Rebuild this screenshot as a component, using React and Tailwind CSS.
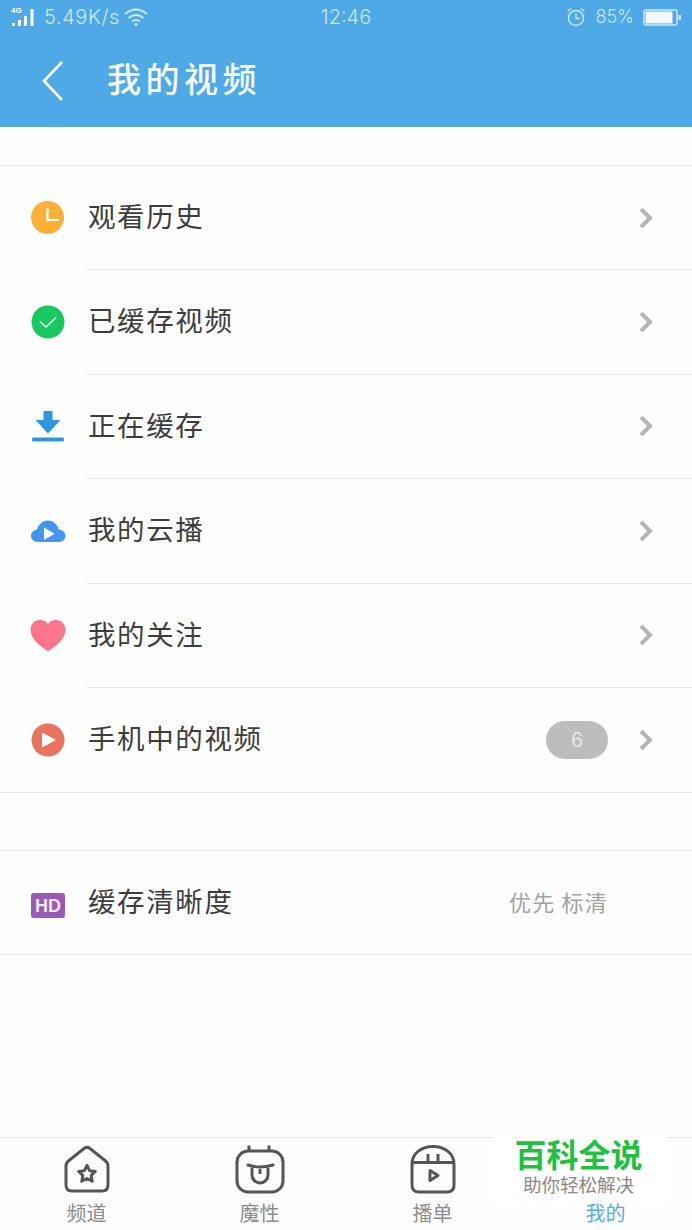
import React from "react";

const ClockIcon = () => (
  <svg width="36" height="36" viewBox="0 0 36 36">
    <circle cx="17.5" cy="17.500" r="16.5" fill="#fbb138" />
    <path d="M17.5 8.500v11.500h11.500" fill="none" stroke="#fff" strokeWidth="2.2" />
  </svg>
);

const CheckIcon = () => (
  <svg width="36" height="36" viewBox="0 0 36 36">
    <circle cx="18" cy="17" r="16.5" fill="#17c95f" />
    <path d="M10.5 17l5.500 5 9.500-9" fill="none" stroke="#fff" strokeWidth="1.6" strokeLinecap="round" />
  </svg>
);

const DownloadIcon = () => (
  <svg width="36" height="36" viewBox="0 0 36 36">
    <path d="M13.5 2h9v9h8L18 24.5 5.500 11h8z" fill="#2f97e0" />
    <rect x="2" y="28.500" width="32" height="4" rx="1.500" fill="#2f97e0" />
  </svg>
);

const CloudIcon = () => (
  <svg width="36" height="36" viewBox="0 0 36 36">
    <path
      d="M8 29c-4 0-7-2.800-7-6 0-3.500 2.600-6 6-6.300C8.500 11.500 12.500 7.500 18 7.500c5.500 0 9.500 4 10.800 9 3.700.2 6.700 3 6.700 6.500 0 3.300-3 6-7 6z"
      fill="#4296f0"
    />
    <path d="M14 14.500l10.500 6.300L14 27z" fill="#fff" />
  </svg>
);

const HeartIcon = () => (
  <svg width="36" height="36" viewBox="0 0 36 36">
    <path
      d="M18 33.500C11 28 .5 22 .5 11.500.5 6 4.700 2 10 2c3.500 0 6.300 1.500 8 4 1.700-2.500 4.500-4 8-4 5.300 0 9.500 4 9.500 9.500C35.500 22 25 28 18 33.500z"
      fill="#fb7488"
    />
  </svg>
);

const PlayIcon = () => (
  <svg width="36" height="36" viewBox="0 0 36 36">
    <circle cx="18" cy="18" r="16.500" fill="#e97561" />
    <path d="M12 10.500L26 18l-14 7.500z" fill="#fff" />
  </svg>
);

const HdIcon = () => (
  <div className="ml-[1px] flex h-[25px] w-[34px] items-center justify-center rounded-[3px] bg-[#9b59b6] font-['Liberation_Sans',sans-serif] text-[18px] leading-none font-bold text-[#f3e9f7]">
    HD
  </div>
);

const Chevron = () => (
  <svg width="16" height="24" viewBox="0 0 16 24">
    <path d="M3 3l9 9-9 9" fill="none" stroke="#b4b4b4" strokeWidth="4" />
  </svg>
);

const rows = [
  { label: "观看历史", icon: <ClockIcon /> },
  { label: "已缓存视频", icon: <CheckIcon /> },
  { label: "正在缓存", icon: <DownloadIcon /> },
  { label: "我的云播", icon: <CloudIcon /> },
  { label: "我的关注", icon: <HeartIcon /> },
  { label: "手机中的视频", icon: <PlayIcon />, badge: "6" },
];

const HomeTab = () => (
  <svg width="48" height="50" viewBox="0 0 48 50" fill="none" stroke="#555" strokeWidth="3">
    <path d="M6 16.500L21 4.500q3-2.200 6 0l15 12q3 2.300 3 5.500v19q0 6-6 6H9q-6 0-6-6V22q0-3.200 3-5.500z" />
    <path
      d="M24 21.500l2.600 5.200 5.700.8-4.100 4 1 5.700-5.200-2.700-5.200 2.700 1-5.700-4.100-4 5.700-.8z"
      strokeLinejoin="round"
    />
  </svg>
);

const MoxingTab = () => (
  <svg width="50" height="50" viewBox="0 0 50 50" fill="none" stroke="#555" strokeWidth="3">
    <rect x="2" y="7" width="46" height="41" rx="11" />
    <path d="M14 1.500v6M34 1.500v6" />
    <path d="M13 21q12 4 25 0" strokeLinecap="round" />
    <path d="M17 24v7a8 8 0 0 0 16 0v-7M25 25v5" />
  </svg>
);

const ListTab = () => (
  <svg width="48" height="50" viewBox="0 0 48 50" fill="none" stroke="#555" strokeWidth="3">
    <path d="M3 20C3 9 13 2.500 24 2.500S45 9 45 20v21q0 7-7 7H10q-7 0-7-7z" />
    <path d="M3 18.500h42M19 10v8M29 10v8" />
    <path d="M21 26.500l8 5-8 5z" strokeLinejoin="round" />
  </svg>
);

const tabs = [
  { label: "频道", icon: <HomeTab /> },
  { label: "魔性", icon: <MoxingTab /> },
  { label: "播单", icon: <ListTab /> },
  { label: "我的", icon: <div className="h-[50px]" />, active: true },
];

const StatusBar = () => (
  <div className="flex h-[34px] items-center justify-between pl-[10px] pr-[10px] font-['Inter',sans-serif] text-[20px] font-light text-[#cbe7fb]">
    <div className="flex w-[240px] items-center">
      <svg width="26" height="22" viewBox="0 0 26 22" fill="#fff">
        <text x="1" y="7" fontSize="8" fontWeight="700" fontFamily="Liberation Sans">4G</text>
        <rect x="2" y="17" width="3" height="3" />
        <rect x="8" y="14" width="3" height="6" />
        <rect x="14" y="10" width="3" height="10" />
        <rect x="20.500" y="3" width="3" height="17" />
      </svg>
      <span className="ml-[8px] leading-none tracking-[0.6px]">5.49K/s</span>
      <svg className="ml-[3px]" width="26" height="20" viewBox="0 0 26 20" fill="none" stroke="#cbe7fb" strokeWidth="2">
        <path d="M2 7q11-9 22 0M5.500 11q7.500-6 15 0M9 14.500q4-3 8 0" />
        <circle cx="13" cy="17.500" r="1.500" fill="#cbe7fb" stroke="none" />
      </svg>
    </div>
    <span className="leading-none">12:46</span>
    <div className="flex w-[240px] items-center justify-end">
      <svg width="20" height="20" viewBox="0 0 20 20" fill="none" stroke="#cbe7fb" strokeWidth="1.500">
        <circle cx="10" cy="11" r="7.500" />
        <path d="M10 6.500V11.500H14M1.500 4.500L5 1.500M18.500 4.500L15 1.500" />
      </svg>
      <span className="ml-[9px] text-[18px] leading-none">85%</span>
      <svg className="ml-[9px]" width="39" height="17" viewBox="0 0 39 17">
        <rect x="1" y="1" width="33" height="15" rx="1.500" fill="none" stroke="#cbe7fb" strokeWidth="1.500" />
        <rect x="2.500" y="2.500" width="27" height="12" fill="#f1f9fe" />
        <rect x="35.500" y="6" width="2.500" height="5" fill="#cbe7fb" />
      </svg>
    </div>
  </div>
);

export default function App() {
  return (
    <div className="flex h-[1230px] w-[692px] flex-col overflow-hidden bg-[#fefefe] font-['Noto_Sans_CJK_SC',sans-serif]">
      <header className="h-[127px] shrink-0 bg-[#4fa9e6]">
        <StatusBar />
        <div className="flex h-[93px] items-center pb-[3px]">
          <svg className="mt-[3px] ml-[41px]" width="24" height="42" viewBox="0 0 24 42" fill="none" stroke="#fff" strokeWidth="2.600">
            <path d="M21 2L3 21l18 19" />
          </svg>
          <h1 className="mb-[3px] ml-[42px] text-[34px] leading-none font-medium tracking-[4.500px] text-[#f6fbfe]">我的视频</h1>
        </div>
      </header>

      <main className="flex-1">
        <section className="mt-[38px] border-y border-[#e8e8e8]">
          {rows.map((row, i) => (
            <div key={row.label} className="flex h-[104.400px] items-stretch">
              <div className="flex w-[86px] shrink-0 items-center pl-[30px]">{row.icon}</div>
              <div className={`flex flex-1 items-center pr-[38px] ${i < rows.length - 1 ? "border-b border-[#e8e8e8]" : ""}`}>
                <span className="mb-[4px] ml-[2px] text-[27.500px] leading-none tracking-[1.600px] text-[#3d3d3d]">{row.label}</span>
                <div className="ml-auto flex items-center">
                  {row.badge && (
                    <span className="mr-[30px] flex h-[38px] w-[62px] items-center justify-center rounded-full bg-[#bdbdbd] font-['Inter',sans-serif] text-[20px] font-light text-[#f2f2f2]">
                      {row.badge}
                    </span>
                  )}
                  <Chevron />
                </div>
              </div>
            </div>
          ))}
        </section>

        <section className="mt-[57px] flex h-[105px] items-center border-y border-[#e8e8e8] pr-[84px] pl-[30px]">
          <div className="w-[56px] shrink-0 pt-[6px]"><HdIcon /></div>
          <span className="mb-[4px] ml-[2px] text-[27.500px] leading-none tracking-[1.600px] text-[#3d3d3d]">缓存清晰度</span>
          <span className="mb-[4px] ml-auto text-[22px] leading-none tracking-[1.200px] text-[#a3a3a3]">优先 标清</span>
        </section>
      </main>

      <nav className="relative grid h-[93px] shrink-0 grid-cols-4 border-t border-[#e8e8e8]">
        {tabs.map((tab) => (
          <div key={tab.label} className="flex flex-col items-center pt-[6px]">
            {tab.icon}
            <span className={`mt-[9px] text-[20px] leading-none ${tab.active ? "text-[#56ade8]" : "text-[#8d8d8d]"}`}>
              {tab.label}
            </span>
          </div>
        ))}
        {/* watermark sits over the tab bar */}
        <div className="absolute top-[-3px] left-[492px] flex h-[68px] w-[176px] flex-col items-center bg-white pr-[3px]">
          <div className="h-[36px] text-[32px] leading-[36px] font-bold text-[#1fc13f]">百科全说</div>
          <div className="h-[26px] text-[18.500px] leading-[26px] text-[#888]">助你轻松解决</div>
        </div>
      </nav>
    </div>
  );
}
